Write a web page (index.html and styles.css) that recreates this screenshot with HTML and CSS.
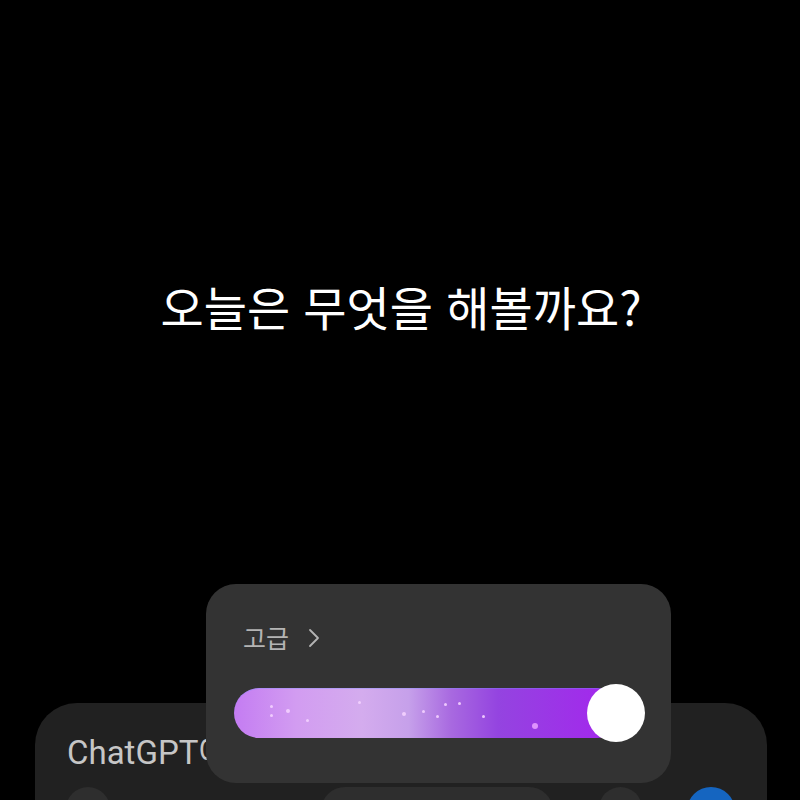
FILE: index.html
```html
<!DOCTYPE html>
<html lang="ko">
<head>
<meta charset="utf-8">
<link rel="stylesheet" href="styles.css">
</head>
<body>
<div class="screen">
  <section class="hero">
    <h1 class="title">오늘은 무엇을 해볼까요?</h1>
  </section>
  <section class="composer">
    <div class="placeholder">ChatGPT에게 메시지</div>
    <div class="tools">
      <span class="btn round"></span>
      <span class="btn pill"></span>
      <span class="btn round"></span>
      <span class="btn send"></span>
    </div>
  </section>
  <div class="popup">
    <div class="popup-label">
      <span>고급</span>
      <svg class="chev" width="12" height="20" viewBox="0 0 12 20"><polyline points="2,2 10,10 2,18" fill="none" stroke="#b4b4b4" stroke-width="1.8" stroke-linecap="round" stroke-linejoin="round"/></svg>
    </div>
    <div class="slider">
      <div class="track">
        <i class="dot" style="left:36px;top:17px"></i>
        <i class="dot" style="left:36px;top:26px"></i>
        <i class="dot big" style="left:52px;top:21px"></i>
        <i class="dot" style="left:72px;top:31px"></i>
        <i class="dot" style="left:124px;top:13px"></i>
        <i class="dot big" style="left:168px;top:24px"></i>
        <i class="dot" style="left:188px;top:22px"></i>
        <i class="dot" style="left:202px;top:27px"></i>
        <i class="dot" style="left:210px;top:15px"></i>
        <i class="dot" style="left:224px;top:14px"></i>
        <i class="dot" style="left:248px;top:27px"></i>
        <i class="dot large" style="left:298px;top:35px"></i>
      </div>
      <div class="knob"></div>
    </div>
  </div>
</div>
</body>
</html>
```
FILE: styles.css
```css
html, body {
  margin: 0;
  padding: 0;
  background: #000;
}
.screen {
  position: relative;
  width: 800px;
  height: 800px;
  overflow: hidden;
  display: flex;
  flex-direction: column;
  background: #000;
}
.hero {
  padding-top: 273px;
  display: flex;
  justify-content: center;
}
.title {
  margin: 0;
  font-family: "Noto Sans CJK KR", "Noto Sans", sans-serif;
  font-weight: 400;
  font-size: 47px;
  line-height: 66px;
  color: #fff;
  letter-spacing: 0;
  padding-left: 2px;
}
.composer {
  margin-top: auto;
  margin-left: 35px;
  width: 732px;
  height: 136px;
  margin-bottom: -39px;
  box-sizing: border-box;
  background: #212121;
  border-radius: 42px 42px 0 0;
  padding: 28px 32px 0 32px;
  display: flex;
  flex-direction: column;
  gap: 12px;
}
.placeholder {
  font-family: Roboto, "Noto Sans CJK KR", sans-serif;
  font-size: 33px;
  line-height: 44px;
  color: #c6c6c6;
  white-space: nowrap;
}
.tools {
  display: flex;
  align-items: center;
  gap: 0;
}
.btn {
  display: block;
  height: 48px;
  background: #2e2e2e;
  border-radius: 24px;
}
.btn.round { width: 44px; }
.tools .btn:nth-child(1) { margin-left: -1px; }
.btn.pill { width: 234px; margin-left: 211px; }
.tools .btn:nth-child(3) { margin-left: 46px; }
.btn.send { width: 48px; margin-left: 45px; background: #1565c0; }
.popup {
  position: absolute;
  left: 206px;
  top: 584px;
  width: 465px;
  height: 199px;
  box-sizing: border-box;
  background: #333333;
  border-radius: 30px;
  padding: 30px 28px 0 28px;
  display: flex;
  flex-direction: column;
  gap: 24px;
}
.popup-label {
  display: flex;
  align-items: center;
  gap: 19px;
  padding-left: 9px;
  font-family: "Noto Sans CJK KR", sans-serif;
  font-size: 25px;
  line-height: 46px;
  color: #b4b4b4;
}
.chev { margin-top: 2px; }
.slider {
  position: relative;
  height: 58px;
  display: flex;
  align-items: center;
}
.track {
  position: relative;
  width: 388px;
  height: 50px;
  border-radius: 25px;
  background: linear-gradient(90deg, #c47cf2 0%, #d29cf1 16%, #d4acee 33%, #c6a0ea 45%, #a869e0 56%, #9444e0 68%, #9b36e6 82%, #a524ee 100%);
  box-shadow: inset 0 1px 0 rgba(120, 140, 255, 0.35);
}
.dot {
  position: absolute;
  width: 3px;
  height: 3px;
  border-radius: 50%;
  background: #f4d2ff;
  opacity: 0.9;
}
.dot.big { width: 4px; height: 4px; }
.dot.large { width: 6px; height: 6px; background: #e59cff; }
.knob {
  position: absolute;
  left: 353px;
  top: 0;
  width: 58px;
  height: 58px;
  border-radius: 50%;
  background: #fff;
}
```
